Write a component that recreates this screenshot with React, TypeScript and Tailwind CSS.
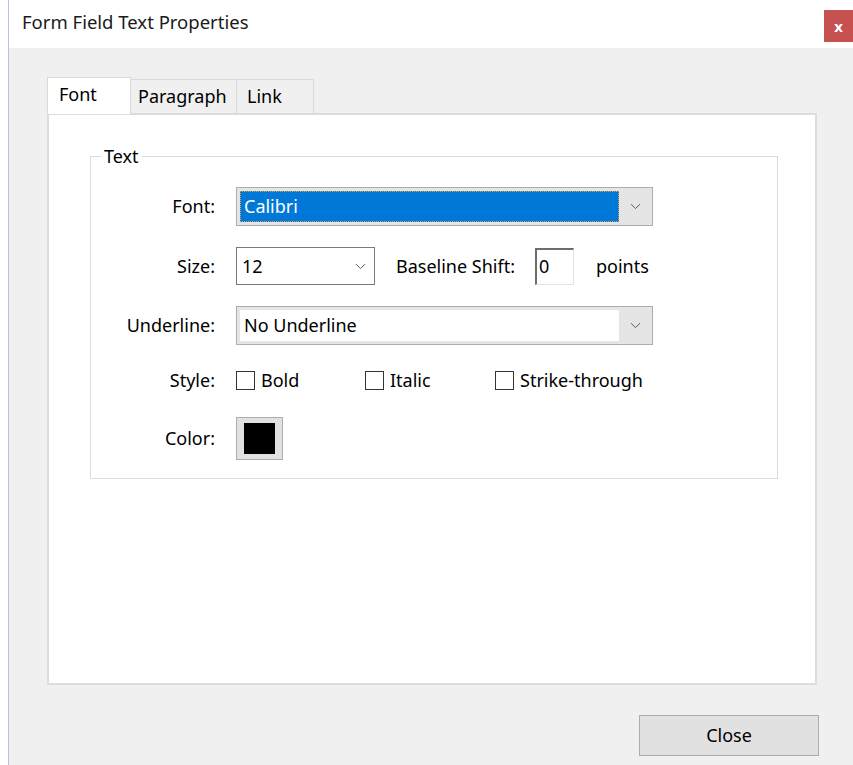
import { ChevronDown } from "lucide-react";

const ui = { fontFamily: '"Noto Sans", "Open Sans", sans-serif' };

function Combo({ value, selected, width }: { value: string; selected?: boolean; width: string }) {
  return (
    <div className={`flex h-[39px] items-center border border-[#adadad] bg-[#e5e5e5] pl-[3px] ${width}`}>
      <div
        className={
          selected
            ? "flex h-[31px] flex-1 items-center border border-dotted border-[#e0a050] bg-[#0078d7] pl-[3px] text-white"
            : "flex h-[31px] flex-1 items-center bg-white pl-[4px] text-black"
        }
      >
        {value}
      </div>
      <div className="flex w-[33px] items-center justify-center text-[#5a5a5a]">
        <ChevronDown size={17} strokeWidth={1.4} />
      </div>
    </div>
  );
}

function Check({ label, className = "" }: { label: string; className?: string }) {
  return (
    <div className={`flex items-center gap-[6px] ${className}`}>
      <span className="h-[19px] w-[19px] border border-[#333] bg-white" />
      <span>{label}</span>
    </div>
  );
}

export default function App() {
  return (
    <div className="flex h-[765px] w-[853px] overflow-hidden bg-white text-[18px] text-black" style={ui}>
      <div className="w-[8px] shrink-0 bg-white" />
      <div className="flex flex-1 flex-col border-l border-[#bcc0dc]">
        {/* title bar */}
        <div className="flex h-[48px] shrink-0 items-start justify-between bg-white">
          <span className="mt-[8px] pl-[13px] text-[18.5px] text-[#1a1a1a]">Form Field Text Properties</span>
          <button className="mt-[10px] flex h-[32px] w-[29px] items-center justify-center bg-[#c75050] text-[15px] font-bold text-white">
            x
          </button>
        </div>

        {/* client area */}
        <div className="flex flex-1 flex-col bg-[#f0f0f0] pl-[38px] pt-[28px]">
          <div className="flex h-[37px] items-end">
            <div className="relative z-10 -mb-px flex h-[37px] w-[84px] items-start border-x border-t border-[#d9d9d9] bg-white pl-[11px] pt-[3px]">
              Font
            </div>
            <div className="flex h-[34px] w-[106px] items-center border-r border-t border-[#d9d9d9] bg-[#f0f0f0] pl-[7px]">
              Paragraph
            </div>
            <div className="flex h-[34px] w-[77px] items-center border-r border-t border-[#d9d9d9] bg-[#f0f0f0] pl-[10px]">
              Link
            </div>
          </div>

          <div className="h-[572px] w-[770px] border-2 border-[#dcdcdc] bg-white pl-[41px] pt-[31px]">
            <fieldset className="h-[333px] w-[688px] border border-[#dcdcdc] pt-[21px]">
              <legend className="ml-[10px] px-[3px] leading-[20px]">Text</legend>

              <div className="grid grid-cols-[124px_1fr] items-center gap-x-[21px]">
                <span className="text-right">Font:</span>
                <Combo value="Calibri" selected width="w-[417px]" />

                <span className="mt-[21px] text-right">Size:</span>
                <div className="mt-[21px] flex items-center">
                  <div className="flex h-[38px] w-[139px] items-center justify-between border border-[#7a7a7a] bg-white pl-[5px] pr-[5px]">
                    <span>12</span>
                    <ChevronDown size={17} strokeWidth={1.4} className="text-[#5a5a5a]" />
                  </div>
                  <span className="ml-[21px]">Baseline Shift:</span>
                  <div className="ml-[20px] flex h-[37px] w-[39px] items-center border-b border-l-2 border-r border-t-2 border-b-[#e3e3e3] border-l-[#6d6d6d] border-r-[#e3e3e3] border-t-[#6d6d6d] bg-white pl-[2px]">
                    0
                  </div>
                  <span className="ml-[22px]">points</span>
                </div>

                <span className="mt-[21px] text-right">Underline:</span>
                <div className="mt-[21px]">
                  <Combo value="No Underline" width="w-[417px]" />
                </div>

                <span className="mt-[20px] text-right">Style:</span>
                <div className="mt-[20px] flex h-[30px] items-center">
                  <Check label="Bold" className="w-[129px]" />
                  <Check label="Italic" className="w-[130px]" />
                  <Check label="Strike-through" />
                </div>

                <span className="mt-[22px] text-right">Color:</span>
                <div className="mt-[22px]">
                  <div className="flex h-[43px] w-[47px] items-center justify-center border border-[#adadad] bg-[#e1e1e1]">
                    <span className="h-[31px] w-[31px] bg-black" />
                  </div>
                </div>
              </div>
            </fieldset>
          </div>

          <div className="flex w-[772px] justify-end pt-[30px]">
            <button className="h-[41px] w-[180px] border border-[#adadad] bg-[#e1e1e1] text-center">Close</button>
          </div>
        </div>
      </div>
    </div>
  );
}
